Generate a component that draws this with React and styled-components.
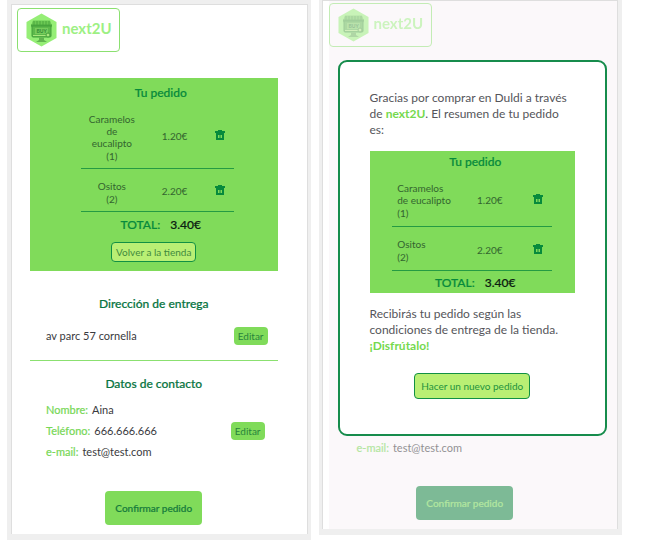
import React from 'react';
import styled, { createGlobalStyle } from 'styled-components';

const GlobalStyle = createGlobalStyle`
  * { box-sizing: border-box; }
  body { margin: 0; background: #fff; font-family: Lato, sans-serif; font-size: 12px; line-height: 16px; color: #3a3a40; }
  button { font-family: inherit; cursor: pointer; }
  h2, p, dl, dd { margin: 0; }
`;

const Page = styled.main`
  display: grid;
  grid-template-columns: 1fr 1fr;
  gap: 8px;
  align-items: start;
  padding: 0 26px 0 7px;
`;
const Frame = styled.div`
  background: #efefef;
  padding: ${(p) => (p.$raised ? '0 4px 6px 3px' : '4px 3px 6px 4px')};
`;
const Screen = styled.section`
  position: relative;
  display: flex;
  flex-direction: column;
  background: #fff;
  border: 1px solid #dedede;
  border-bottom: 0;
  padding: 3px 29px 9px 18px;
`;
const DimmedScreen = styled(Screen)`
  justify-content: space-between;
  min-height: 529px;
  padding: 2px 6px 9px;
  background: linear-gradient(to right, #fff 6px, #fbf8fa 6px);
`;

const LogoBox = styled.div`
  display: flex;
  align-items: center;
  align-self: flex-start;
  gap: 5px;
  width: 103px;
  height: 44px;
  padding-left: 8px;
  border: 1px solid #8be070;
  border-radius: 4px;
  margin-left: ${(p) => (p.$faded ? '0' : '-13px')};
  opacity: ${(p) => (p.$faded ? 0.5 : 1)};
`;
const Brand = styled.span`
  padding-bottom: 4px;
  font-size: 15px;
  line-height: 20px;
  font-weight: 700;
  color: #9df083;
`;

function Logo({ faded }) {
  return (
    <LogoBox $faded={faded}>
      <svg width="31" height="34" viewBox="0 0 31 34" aria-hidden="true">
        <path d="M15.5 .5 30.5 9v16L15.5 33.5.5 25V9z" fill="#95ee76" />
        <path d="M7 7.5h17l2 5H5z" fill="#6cc954" />
        <path d="M8 8v5M11 8v5M14 8v5M17 8v5M20 8v5M23 8v5" stroke="#4ba83f" strokeWidth="1" />
        <path d="M5 11.5h21v1.5a2 2 0 0 1-3.5 1 2 2 0 0 1-3.5 0 2 2 0 0 1-3.5 0 2 2 0 0 1-3.5 0 2 2 0 0 1-3.5 0A2 2 0 0 1 5 13z" fill="#4ba83f" />
        <rect x="6" y="13" width="19" height="11" rx="1" fill="#5db94b" stroke="#43a03b" />
        <rect x="9" y="15" width="13" height="6" fill="#76cc5c" />
        <text x="15.5" y="20" textAnchor="middle" fontSize="5" fontWeight="700" fill="#2f8a34">BUY</text>
        <path d="M7 22.5h17" stroke="#a9e77d" />
        <path d="M13 24.5h5V27l3 2H10l3-2z" fill="#62b450" />
        <circle cx="22" cy="22" r="2" fill="#a9e77d" stroke="#43a03b" />
      </svg>
      <Brand>next2U</Brand>
    </LogoBox>
  );
}

const Order = styled.section`
  display: flex;
  flex-direction: column;
  align-items: center;
  background: #80db5a;
  margin-top: ${(p) => (p.$compact ? '13px' : '26px')};
  padding: ${(p) => (p.$compact ? '2px 22px 2px' : '6px 42px 9px')};
`;
const Title = styled.h2`
  font-size: 12px;
  line-height: 18px;
  font-weight: 500;
  text-align: center;
  -webkit-text-stroke: 0.2px currentColor;
  color: ${(p) => (p.$dark ? '#087542' : '#078a3c')};
`;
const OrderTitle = styled(Title)`
  padding-left: ${(p) => (p.$compact ? '6px' : '14px')};
`;
const Items = styled.table`
  width: 100%;
  max-width: ${(p) => (p.$compact ? '160px' : '153px')};
  margin-left: ${(p) => (p.$compact ? '0' : '8px')};
  border-collapse: collapse;
  table-layout: fixed;
  font-size: 10px;
  line-height: 12px;
  color: #33652f;
`;
const Row = styled.tr`
  border-bottom: 1px solid #259b43;
`;
const Name = styled.td`
  width: 40%;
  padding: ${(p) => (p.$compact ? '11px 0 6px 5px' : '11px 6px 5px')};
  text-align: ${(p) => (p.$compact ? 'left' : 'center')};
`;
const Count = styled.div`
  line-height: 14px;
`;
const Price = styled.td`
  width: 42%;
  padding: 2px 0 0;
  text-align: center;
`;
const Action = styled.td`
  width: 18%;
  padding: 2px 0 0;
  text-align: center;
`;
const IconButton = styled.button`
  display: inline-flex;
  padding: 0;
  border: 0;
  background: none;
`;
const Total = styled.p`
  display: flex;
  gap: 10px;
  padding: ${(p) => (p.$compact ? '4px 0 0 6px' : '5px 0 0 14px')};
  font-size: 12px;
  line-height: 16px;
  font-weight: 500;
  color: #078a3c;
  -webkit-text-stroke: 0.2px currentColor;
`;
const Amount = styled.span`
  color: #0b2010;
`;
const OutlineButton = styled.button`
  align-self: center;
  border: 1px solid #119044;
  border-radius: 4px;
  background: #b9ef74;
  color: ${(p) => (p.$large ? '#23923e' : '#3f8a3d')};
  font-size: 10px;
  line-height: 16px;
  padding: ${(p) => (p.$large ? '4px 6px' : '1px 4px')};
  margin-top: ${(p) => (p.$large ? '19px' : '9px')};
`;

function TrashIcon() {
  return (
    <svg width="10" height="10" viewBox="0 0 10 10" aria-hidden="true">
      <path fill="#078a3c" fillRule="evenodd" d="M3 0h4v1h3v2H9v7H1V3H0V1h3zM3 5v3h1.5V5zm2.5 0v3H7V5z" />
    </svg>
  );
}

const items = [
  { name: 'Caramelos de eucalipto', count: '(1)', price: '1.20€' },
  { name: 'Ositos', count: '(2)', price: '2.20€' },
];

function OrderSummary({ compact, children }) {
  return (
    <Order $compact={compact}>
      <OrderTitle $compact={compact}>Tu pedido</OrderTitle>
      <Items $compact={compact}>
        <tbody>
          {items.map((item) => (
            <Row key={item.name}>
              <Name $compact={compact}>
                {item.name}
                <Count>{item.count}</Count>
              </Name>
              <Price>{item.price}</Price>
              <Action>
                <IconButton type="button" aria-label={`Eliminar ${item.name}`}>
                  <TrashIcon />
                </IconButton>
              </Action>
            </Row>
          ))}
        </tbody>
      </Items>
      <Total $compact={compact}>
        TOTAL: <Amount>3.40€</Amount>
      </Total>
      {children}
    </Order>
  );
}

const Section = styled.section`
  display: flex;
  flex-direction: column;
  gap: ${(p) => p.$gap};
  padding: ${(p) => p.$pad};
  border-bottom: ${(p) => (p.$divided ? '1px solid #8be070' : '0')};
`;
const Line = styled.div`
  display: flex;
  align-items: center;
  justify-content: space-between;
  padding: ${(p) => (p.$inset ? '0 13px 0 16px' : '0 10px 0 16px')};
  font-size: 11px;
`;
const EditButton = styled.button`
  border: 0;
  border-radius: 4px;
  background: #80db5a;
  color: #28833c;
  font-size: 10px;
  line-height: 16px;
  padding: 1px 4px;
`;
const Details = styled.dl`
  display: flex;
  flex-direction: column;
  gap: 5px;
  font-size: 11px;
`;
const Detail = styled.div`
  display: flex;
  gap: 4px;
  opacity: ${(p) => (p.$faded ? 0.55 : 1)};
`;
const Term = styled.dt`
  color: #77d756;
  -webkit-text-stroke: 0.2px currentColor;
`;
const ConfirmButton = styled.button`
  align-self: center;
  border: 0;
  border-radius: 4px;
  background: ${(p) => (p.$faded ? '#7dba96' : '#80db5a')};
  color: ${(p) => (p.$faded ? '#b2e6a0' : '#167c3c')};
  font-size: 10px;
  line-height: 16px;
  font-weight: 500;
  -webkit-text-stroke: 0.2px currentColor;
  padding: 9px 10px;
`;
const Footer = styled.div`
  display: flex;
  flex-direction: column;
  gap: 30px;
  padding: 0 38px 0 28px;
`;

const Modal = styled.div`
  position: absolute;
  top: 59px;
  left: 15px;
  right: 10px;
  display: flex;
  flex-direction: column;
  padding: 28px 30px 35px 30px;
  border: 2px solid #168c4c;
  border-radius: 9px;
  background: #fff;
`;
const Message = styled.p`
  color: #55555a;
  margin-top: ${(p) => (p.$after ? '13px' : '0')};
`;
const Highlight = styled.strong`
  font-weight: 700;
  color: #75d94e;
`;

export default function App() {
  return (
    <>
      <GlobalStyle />
      <Page>
        <Frame>
          <Screen>
            <Logo />
            <OrderSummary>
              <OutlineButton type="button">Volver a la tienda</OutlineButton>
            </OrderSummary>
            <Section $gap="14px" $pad="24px 0 15px" $divided>
              <Title $dark>Dirección de entrega</Title>
              <Line>
                <span>av parc 57 cornella</span>
                <EditButton type="button" aria-label="Editar dirección">Editar</EditButton>
              </Line>
            </Section>
            <Section $gap="9px" $pad="14px 0 31px">
              <Title $dark>Datos de contacto</Title>
              <Line $inset>
                <Details>
                  <Detail><Term>Nombre:</Term><dd>Aina</dd></Detail>
                  <Detail><Term>Teléfono:</Term><dd>666.666.666</dd></Detail>
                  <Detail><Term>e-mail:</Term><dd>test@test.com</dd></Detail>
                </Details>
                <EditButton type="button" aria-label="Editar contacto">Editar</EditButton>
              </Line>
            </Section>
            <ConfirmButton type="button">Confirmar pedido</ConfirmButton>
          </Screen>
        </Frame>
        <Frame $raised>
          <DimmedScreen>
            <Logo faded />
            <Footer>
              <Details>
                <Detail $faded><Term>e-mail:</Term><dd>test@test.com</dd></Detail>
              </Details>
              <ConfirmButton type="button" $faded disabled>Confirmar pedido</ConfirmButton>
            </Footer>
            <Modal role="dialog" aria-label="Resumen de tu pedido">
              <Message>
                Gracias por comprar en Duldi a través de <Highlight>next2U</Highlight>. El resumen de tu pedido es:
              </Message>
              <OrderSummary compact />
              <Message $after>
                Recibirás tu pedido según las condiciones de entrega de la tienda. <Highlight>¡Disfrútalo!</Highlight>
              </Message>
              <OutlineButton type="button" $large>Hacer un nuevo pedido</OutlineButton>
            </Modal>
          </DimmedScreen>
        </Frame>
      </Page>
    </>
  );
}
